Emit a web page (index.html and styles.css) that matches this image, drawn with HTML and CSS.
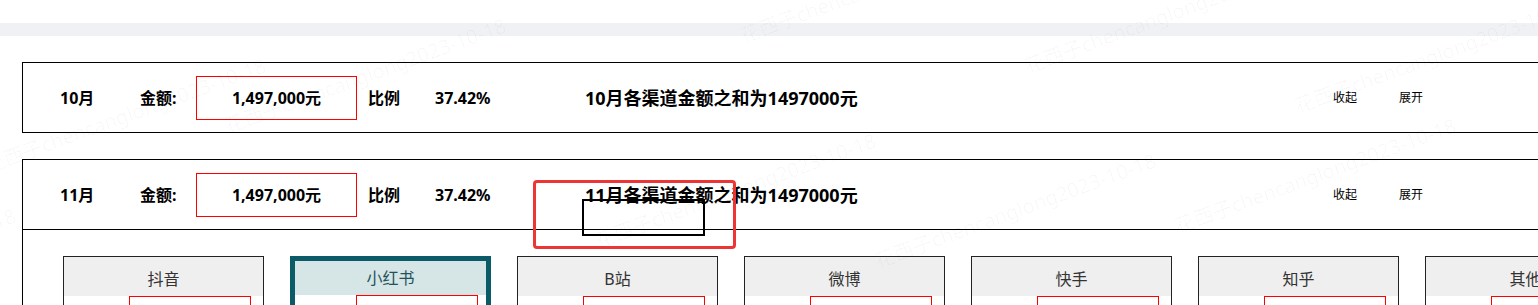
FILE: index.html
```html
<!DOCTYPE html>
<html lang="zh-CN">
<head>
    <meta charset="UTF-8">
    <title>渠道金额统计</title>
    <link rel="stylesheet" href="styles.css">
</head>
<body>

<div class="top-bar"></div>

<div class="month-list">
    <!-- 10月 (收起状态) -->
    <div class="month-card">
        <div class="month-head">
            <span class="month">10月</span>
            <span class="label">金额:</span>
            <div class="amount">1,497,000元</div>
            <span class="ratio-label">比例</span>
            <span class="ratio">37.42%</span>
            <span class="summary">10月各渠道金额之和为1497000元</span>
            <a class="toggle">收起</a>
            <a class="toggle">展开</a>
        </div>
    </div>

    <!-- 11月 (展开状态) -->
    <div class="month-card">
        <div class="month-head has-body">
            <span class="month">11月</span>
            <span class="label">金额:</span>
            <div class="amount">1,497,000元</div>
            <span class="ratio-label">比例</span>
            <span class="ratio">37.42%</span>
            <span class="summary">11月各渠道金额之和为1497000元</span>
            <a class="toggle">收起</a>
            <a class="toggle">展开</a>
        </div>
        <div class="channel-list">
            <div class="channel">
                <div class="channel-name">抖音</div>
                <div class="channel-body"><div class="channel-input"></div></div>
            </div>
            <div class="channel active">
                <div class="channel-name">小红书</div>
                <div class="channel-body"><div class="channel-input"></div></div>
            </div>
            <div class="channel">
                <div class="channel-name">B站</div>
                <div class="channel-body"><div class="channel-input"></div></div>
            </div>
            <div class="channel">
                <div class="channel-name">微博</div>
                <div class="channel-body"><div class="channel-input"></div></div>
            </div>
            <div class="channel">
                <div class="channel-name">快手</div>
                <div class="channel-body"><div class="channel-input"></div></div>
            </div>
            <div class="channel">
                <div class="channel-name">知乎</div>
                <div class="channel-body"><div class="channel-input"></div></div>
            </div>
            <div class="channel">
                <div class="channel-name">其他</div>
                <div class="channel-body"><div class="channel-input"></div></div>
            </div>
        </div>
    </div>
</div>

<!-- 标注框 -->
<div class="mark mark-red"></div>
<div class="mark mark-black"></div>

<!-- 水印 -->
<div class="watermark">
    <span style="left:745px; top:20px">花西子chencanglong2023-10-18</span>
    <span style="left:1030px; top:50px">花西子chencanglong2023-10-18</span>
    <span style="left:1300px; top:90px">花西子chencanglong2023-10-18</span>
    <span style="left:-10px; top:150px">花西子chencanglong2023-10-18</span>
    <span style="left:230px; top:110px">花西子chencanglong2023-10-18</span>
    <span style="left:600px; top:225px">花西子chencanglong2023-10-18</span>
    <span style="left:880px; top:245px">花西子chencanglong2023-10-18</span>
    <span style="left:-260px; top:300px">花西子chencanglong2023-10-18</span>
    <span style="left:1180px; top:210px">花西子chencanglong2023-10-18</span>
</div>

</body>
</html>
```

FILE: styles.css
```css
html, body { margin: 0; padding: 0; }
body { font-family: "Noto Sans", "Noto Sans CJK SC", sans-serif; color: #000; background: #fff; overflow: hidden; height: 305px; position: relative; }

.top-bar { height: 13px; margin-top: 23px; background-color: #f0f1f5; }

.month-list { padding: 26px 0 0 22px; }
.month-card { width: 1560px; border: 1px solid #000; margin-bottom: 26px; }
.month-head { display: flex; align-items: center; height: 69px; padding-left: 37px; font-size: 16px; font-weight: bold; line-height: 1; }
.month-head.has-body { border-bottom: 1px solid #000; }
.month { width: 80px; flex-shrink: 0; }
.label { width: 56px; flex-shrink: 0; }
.amount { width: 161px; height: 44px; box-sizing: border-box; border: 1px solid #f00; display: flex; align-items: center; justify-content: center; flex-shrink: 0; }
.ratio-label { width: 67px; margin-left: 11px; flex-shrink: 0; }
.ratio { width: 150px; flex-shrink: 0; }
.summary { width: 748px; font-size: 18px; flex-shrink: 0; }
.toggle { width: 66px; font-size: 12px; font-weight: normal; cursor: pointer; flex-shrink: 0; }

.channel-list { display: flex; gap: 26px; padding: 26px 0 0 40px; }
.channel { width: 201px; flex-shrink: 0; box-sizing: border-box; border: 1px solid #222; }
.channel-name { height: 39px; line-height: 44px; text-align: center; background-color: #efefef; font-size: 16px; color: #333; overflow: hidden; }
.channel-body { padding-left: 65px; height: 60px; }
.channel-input { width: 122px; height: 32px; box-sizing: border-box; border: 1px solid #f00; }

.channel.active { border: 5px solid #0b5a68; }
.channel.active .channel-name { height: 34px; line-height: 34px; background-color: #d6e5e6; color: #24525b; }
.channel.active .channel-body { padding-left: 61px; }

.mark { position: absolute; box-sizing: border-box; pointer-events: none; }
.mark-red { left: 533px; top: 180px; width: 203px; height: 69px; border: 3px solid #ee3535; border-radius: 4px; }
.mark-black { left: 582px; top: 199px; width: 123px; height: 37px; border: 2px solid #000; }

.watermark { position: absolute; left: 0; top: 0; right: 0; bottom: 0; pointer-events: none; overflow: hidden; }
.watermark span { position: absolute; white-space: nowrap; font-size: 20px; color: rgba(0, 0, 0, 0.03); transform: rotate(-20deg); transform-origin: left bottom; }
```
